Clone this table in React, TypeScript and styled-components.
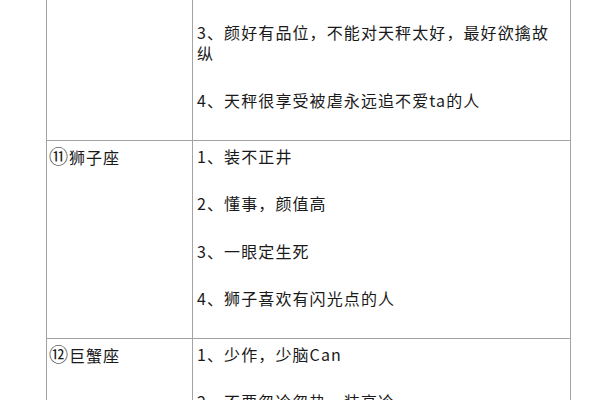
import React from "react";
import styled, { createGlobalStyle } from "styled-components";

const Global = createGlobalStyle`
  html, body { margin: 0; padding: 0; background: #ffffff; }
  body { font-family: "Noto Sans CJK SC", "Noto Sans", sans-serif; color: #1a1a1a; overflow: hidden; }
`;

const Page = styled.div`
  width: 600px;
  height: 400px;
  overflow: hidden;
  padding-left: 46px;
  box-sizing: border-box;
`;

const Table = styled.div`
  width: 523px;
  margin-top: -2px;
  border-left: 1px solid #a3a3a3;
  border-right: 1px solid #a3a3a3;
`;

const Row = styled.div<{ $top?: boolean }>`
  display: grid;
  grid-template-columns: 146px 375px;
  border-top: ${(p) => (p.$top ? "none" : "1px solid #a3a3a3")};
`;

const NameCell = styled.div`
  border-right: 1px solid #a3a3a3;
  padding: 5px 0 0 2px;
  font-size: 16px;
  line-height: 21px;
  letter-spacing: 1px;
`;

const Circled = styled.span`
  font-size: 19px;
  line-height: 1;
  letter-spacing: 0;
  margin-right: 1px;
`;

const ListCell = styled.div<{ $pt: number }>`
  padding: ${(p) => p.$pt}px 10px 2px 4px;
`;

const Item = styled.p`
  margin: 0 0 26.5px 0;
  font-size: 16px;
  line-height: 21px;
  letter-spacing: 1.1px;
`;

const rows = [
  {
    num: "",
    name: "",
    top: true,
    pt: 23.5,
    items: ["3、颜好有品位，不能对天秤太好，最好欲擒故纵", "4、天秤很享受被虐永远追不爱ta的人"],
  },
  {
    num: "⑪",
    name: "狮子座",
    pt: 5,
    items: ["1、装不正井", "2、懂事，颜值高", "3、一眼定生死", "4、狮子喜欢有闪光点的人"],
  },
  {
    num: "⑫",
    name: "巨蟹座",
    pt: 5,
    items: ["1、少作，少脑Can", "2、不要忽冷忽热，装高冷"],
  },
];

export default function App() {
  return (
    <>
      <Global />
      <Page>
        <Table>
          {rows.map((r, i) => (
            <Row key={i} $top={r.top}>
              <NameCell>
                {r.num && <Circled>{r.num}</Circled>}
                {r.name}
              </NameCell>
              <ListCell $pt={r.pt}>
                {r.items.map((t, j) => (
                  <Item key={j}>{t}</Item>
                ))}
              </ListCell>
            </Row>
          ))}
        </Table>
      </Page>
    </>
  );
}
